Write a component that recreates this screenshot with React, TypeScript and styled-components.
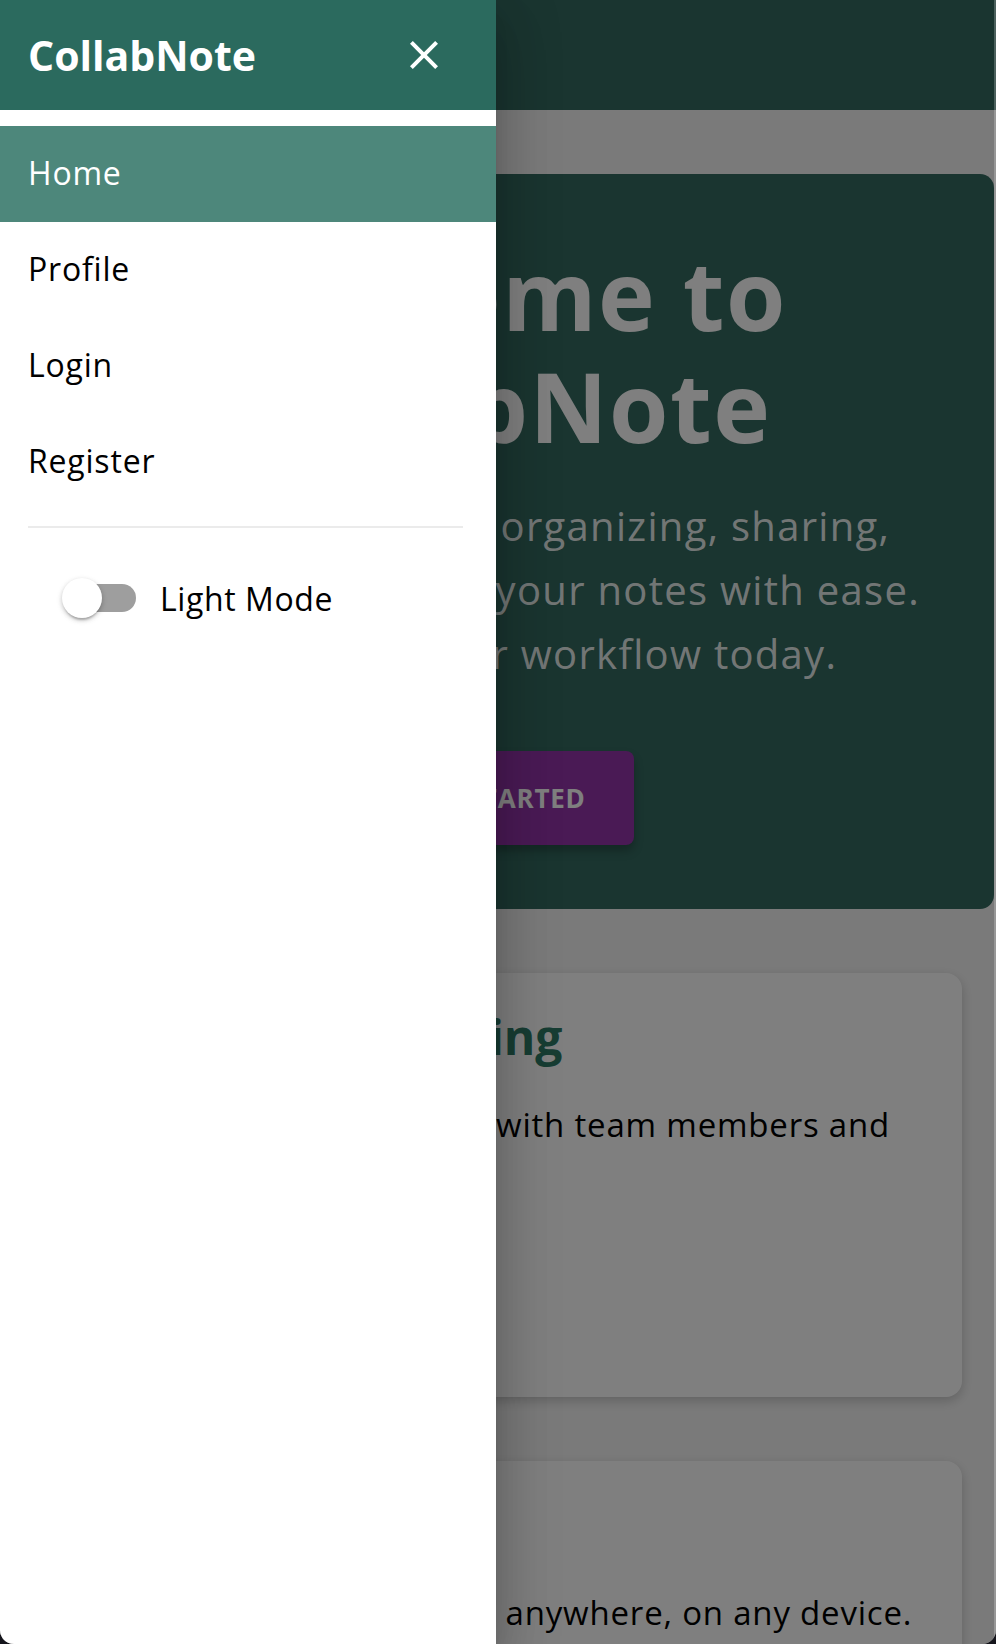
import React from 'react';
import styled, { createGlobalStyle } from 'styled-components';

const GlobalStyle = createGlobalStyle`
  html, body {
    margin: 0;
    padding: 0;
    background: #15151c;
  }
  body {
    font-family: "Open Sans", "Noto Sans", sans-serif;
    overflow: hidden;
  }
  * {
    box-sizing: border-box;
  }
`;

// window frame with rounded bottom corners
const Frame = styled.div`
  position: relative;
  width: 996px;
  height: 1644px;
  overflow: hidden;
  border-radius: 0 0 14px 14px;
  background: #f5f5f5;
  &::after {
    content: '';
    position: absolute;
    top: 0;
    right: 0;
    bottom: 0;
    width: 2px;
    background: rgba(255, 255, 255, 0.22);
    pointer-events: none;
    z-index: 10;
  }
`;

const AppBar = styled.header`
  height: 110px;
  background: #346a60;
  display: flex;
  align-items: center;
  gap: 32px;
  padding: 0 32px;
  color: #fff;
`;

const AppTitle = styled.span`
  font-size: 40px;
  font-weight: 700;
`;

const Main = styled.main`
  display: flex;
  flex-direction: column;
  gap: 64px;
  padding: 64px 2px 64px 0;
`;

const Hero = styled.section`
  background: #346a60;
  border-radius: 14px;
  padding: 64px;
  display: flex;
  flex-direction: column;
  align-items: center;
  text-align: center;
  color: #fff;
`;

const HeroTitle = styled.h1`
  margin: 0;
  font-size: 96px;
  line-height: 112px;
  font-weight: 700;
  letter-spacing: 1.5px;
`;

const HeroText = styled.p`
  margin: 32px 0 0;
  font-size: 40px;
  line-height: 64px;
  letter-spacing: 1.3px;
  color: rgba(255, 255, 255, 0.9);
`;

const StartButton = styled.button`
  margin-top: 65px;
  padding: 24px 48px;
  border: none;
  border-radius: 8px;
  background: #9434aa;
  color: #fff;
  font-family: inherit;
  font-size: 26px;
  line-height: 46px;
  font-weight: 700;
  letter-spacing: 0.8px;
  text-transform: uppercase;
  box-shadow: 0 6px 10px rgba(0, 0, 0, 0.25);
`;

const FeatureCard = styled.article`
  margin: 0 32px;
  min-height: 424px;
  padding: 32px;
  background: #fff;
  border-radius: 16px;
  box-shadow: 0 4px 12px rgba(0, 0, 0, 0.2);
`;

const FeatureTitle = styled.h2`
  margin: 0;
  font-size: 48px;
  line-height: 64px;
  font-weight: 700;
  color: #2e7a66;
`;

const FeatureText = styled.p`
  margin: 32px 0 0;
  font-size: 33px;
  line-height: 48px;
  letter-spacing: 0.8px;
  color: #000;
`;

const Backdrop = styled.div`
  position: absolute;
  inset: 0;
  background: rgba(0, 0, 0, 0.5);
  z-index: 5;
`;

const Drawer = styled.aside`
  position: absolute;
  top: 0;
  left: 0;
  bottom: 0;
  width: 496px;
  background: #fff;
  z-index: 6;
  display: flex;
  flex-direction: column;
  box-shadow: 0 16px 20px -10px rgba(0, 0, 0, 0.2), 0 32px 48px 4px rgba(0, 0, 0, 0.14),
    0 12px 60px 10px rgba(0, 0, 0, 0.12);
`;

const DrawerHeader = styled.div`
  height: 110px;
  flex: none;
  background: #2b6a5e;
  display: flex;
  align-items: center;
  justify-content: space-between;
  padding: 0 48px 0 28px;
  color: #fff;
`;

const Brand = styled.span`
  font-size: 41px;
  font-weight: 700;
`;

const IconButton = styled.button`
  width: 48px;
  height: 48px;
  padding: 0;
  border: none;
  background: transparent;
  color: #fff;
  display: flex;
  align-items: center;
  justify-content: center;
`;

const NavList = styled.nav`
  margin-top: 16px;
  display: flex;
  flex-direction: column;
`;

const NavItem = styled.a<{ $active?: boolean }>`
  height: 96px;
  display: flex;
  align-items: center;
  padding: 0 0 3px 28px;
  font-size: 32px;
  letter-spacing: 0.8px;
  color: ${(p) => (p.$active ? '#fff' : '#000')};
  background: ${(p) => (p.$active ? '#4d877b' : 'transparent')};
  text-decoration: none;
`;

const Divider = styled.hr`
  margin: 16px 33px 0 28px;
  border: none;
  height: 2px;
  background: #ebebeb;
`;

const ToggleRow = styled.label`
  margin-top: 32px;
  padding-left: 44px;
  display: flex;
  align-items: center;
  font-size: 32px;
  letter-spacing: 0.6px;
  color: #000;
`;

const SwitchRoot = styled.span`
  position: relative;
  flex: none;
  width: 116px;
  height: 76px;
`;

const SwitchTrack = styled.span`
  position: absolute;
  left: 24px;
  top: 24px;
  width: 68px;
  height: 28px;
  border-radius: 14px;
  background: #9e9e9e;
`;

const SwitchThumb = styled.span`
  position: absolute;
  left: 18px;
  top: 18px;
  width: 40px;
  height: 40px;
  border-radius: 50%;
  background: #fff;
  box-shadow: 0 4px 2px -2px rgba(0, 0, 0, 0.2), 0 2px 4px 0 rgba(0, 0, 0, 0.14),
    0 2px 6px 0 rgba(0, 0, 0, 0.12);
`;

const CloseIcon = () => (
  <svg width="48" height="48" viewBox="0 0 24 24" fill="currentColor">
    <path d="M19 6.41 17.59 5 12 10.59 6.41 5 5 6.41 10.59 12 5 17.59 6.41 19 12 13.41 17.59 19 19 17.59 13.41 12z" />
  </svg>
);

const MenuIcon = () => (
  <svg width="48" height="48" viewBox="0 0 24 24" fill="currentColor">
    <path d="M3 18h18v-2H3zm0-5h18v-2H3zm0-7v2h18V6z" />
  </svg>
);

const links = ['Home', 'Profile', 'Login', 'Register'];

export default function App() {
  return (
    <Frame>
      <GlobalStyle />
      <AppBar>
        <MenuIcon />
        <AppTitle>CollabNote</AppTitle>
      </AppBar>
      <Main>
        <Hero>
          <HeroTitle>
            Welcome to
            <br />
            CollabNote
          </HeroTitle>
          <HeroText>
            Your workspace for organizing, sharing,
            <br />
            and collaborating on your notes with ease.
            <br />
            Supercharge your workflow today.
          </HeroText>
          <StartButton>Get Started</StartButton>
        </Hero>
        <FeatureCard>
          <FeatureTitle>Instant Note Sharing</FeatureTitle>
          <FeatureText>
            Share your notes instantly with team members and
            <br />
            collaborate in real time.
          </FeatureText>
        </FeatureCard>
        <FeatureCard>
          <FeatureTitle>Cloud Sync</FeatureTitle>
          <FeatureText>Securely access your notes anywhere, on any device.</FeatureText>
        </FeatureCard>
      </Main>
      <Backdrop />
      <Drawer>
        <DrawerHeader>
          <Brand>CollabNote</Brand>
          <IconButton aria-label="close">
            <CloseIcon />
          </IconButton>
        </DrawerHeader>
        <NavList>
          {links.map((l) => (
            <NavItem key={l} href="#" $active={l === 'Home'}>
              {l}
            </NavItem>
          ))}
        </NavList>
        <Divider />
        <ToggleRow>
          <SwitchRoot>
            <SwitchTrack />
            <SwitchThumb />
          </SwitchRoot>
          Light Mode
        </ToggleRow>
      </Drawer>
    </Frame>
  );
}
